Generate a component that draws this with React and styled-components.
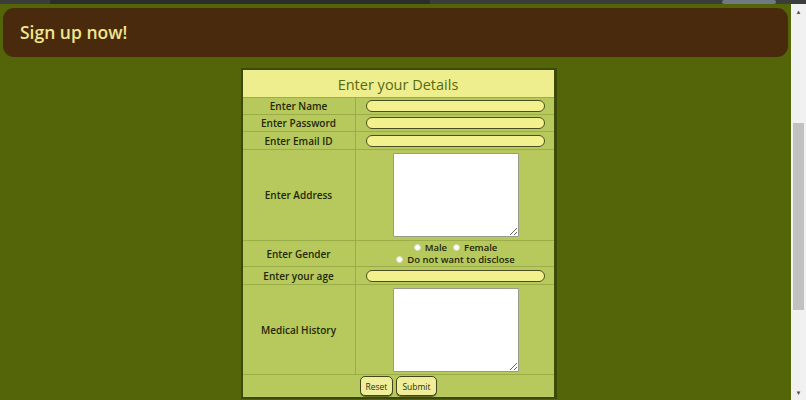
import React from "react";
import styled, { createGlobalStyle } from "styled-components";

const Global = createGlobalStyle`
  html, body { margin: 0; padding: 0; height: 400px; overflow: hidden; }
  body { font-family: "Open Sans", "Lato", sans-serif; background: #546509; }
  * { box-sizing: border-box; }
`;

const Shell = styled.div`
  display: flex;
  flex-direction: column;
  height: 400px;
`;

const TopStrip = styled.div`
  height: 4px;
  background: #3b3d3a;
  display: flex;
  align-items: stretch;
`;

const StripPart = styled.div`
  width: ${(p) => p.$w}px;
  background: ${(p) => p.$c};
  border-radius: ${(p) => p.$r || 0}px;
`;

const Body = styled.div`
  flex: 1;
  display: flex;
  min-height: 0;
`;

const Page = styled.div`
  flex: 1;
  padding: 4px 3px 0 3px;
  overflow: hidden;
  display: flex;
  flex-direction: column;
  align-items: center;
`;

const Banner = styled.header`
  align-self: stretch;
  height: 49px;
  background: #4a2a0c;
  border-radius: 11px;
  display: flex;
  align-items: center;
  padding-left: 17px;
  padding-bottom: 1px;
`;

const BannerTitle = styled.h1`
  margin: 0;
  font-size: 17.5px;
  font-weight: 600;
  color: #f0e68c;
`;

const Form = styled.form`
  margin-top: 11px;
  margin-left: 6px;
  width: 316px;
  border: 2px solid #3b4a06;
  border-right-width: 3px;
  background: #b7c95c;
  display: grid;
  grid-template-columns: 113px 1fr;
`;

const Caption = styled.div`
  grid-column: 1 / -1;
  height: 27px;
  background: #efee8e;
  color: #566a10;
  font-size: 14.5px;
  display: flex;
  align-items: center;
  justify-content: center;
  padding-top: 1px;
`;

const Label = styled.div`
  height: ${(p) => p.$h}px;
  border-top: 1px solid #9aae48;
  border-right: 1px solid #9aae48;
  display: flex;
  align-items: center;
  justify-content: center;
  font-size: 10px;
  font-weight: 600;
  color: #23270b;
`;

const Field = styled.div`
  height: ${(p) => p.$h}px;
  border-top: 1px solid #9aae48;
  display: flex;
  flex-direction: column;
  align-items: center;
  justify-content: center;
`;

const TextInput = styled.input`
  width: 179px;
  height: 12px;
  margin: 0 0 0 2px;
  padding: 0 6px;
  background: #f3f08e;
  border: 1px solid #4b4d22;
  border-radius: 7px;
  outline: none;
`;

const Area = styled.textarea`
  width: 126px;
  height: 84px;
  margin: 0 0 0 3px;
  background: #fff;
  border: 1px solid #9a9a8a;
  border-radius: 1px;
  resize: both;
`;

const RadioLine = styled.div`
  display: flex;
  align-items: center;
  gap: 4px;
  font-size: 9.5px;
  font-weight: 600;
  color: #23270b;
  line-height: 12px;
  height: 12px;
  white-space: nowrap;
  margin-left: 2px;
`;

const RadioDot = styled.span`
  width: 7px;
  height: 7px;
  border-radius: 50%;
  background: #fff;
  border: 1px solid #d8dcc0;
  display: inline-block;
  flex: none;
  margin-left: ${(p) => p.$ml || 0}px;
`;

const ButtonRow = styled.div`
  grid-column: 1 / -1;
  border-top: 1px solid #9aae48;
  height: 23px;
  display: flex;
  justify-content: center;
  align-items: flex-start;
  gap: 3px;
  padding-top: 1px;
`;

const Button = styled.button`
  height: 20px;
  padding: 0 5px;
  font-family: inherit;
  font-size: 8.5px;
  color: #2d3010;
  background: #efee9a;
  border: 1px solid #44461c;
  border-radius: 5px;
  box-shadow: 0 1px 0 #6b6d30;
`;

const Scrollbar = styled.div`
  width: 15px;
  background: #f1f1f1;
  display: flex;
  flex-direction: column;
  align-items: center;
`;

const Arrow = styled.div`
  height: 15px;
  display: flex;
  align-items: center;
  justify-content: center;
  color: #505050;
  font-size: 6px;
  line-height: 1;
`;

const Track = styled.div`
  flex: 1;
  width: 100%;
  padding: ${(p) => p.$before}px 2px ${(p) => p.$after}px 2px;
  display: flex;
`;

const Thumb = styled.div`
  flex: 1;
  background: #c1c1c1;
`;

const Row = ({ label, h, children }) => (
  <>
    <Label $h={h}>{label}</Label>
    <Field $h={h}>{children}</Field>
  </>
);

export default function App() {
  return (
    <>
      <Global />
      <Shell>
        <TopStrip>
          <StripPart $w={50} $c="#3b3d3a" />
          <StripPart $w={380} $c="#2c2e2c" />
          <StripPart $w={292} $c="#3b3d3a" />
          <StripPart $w={54} $c="#6f7a82" $r={3} />
        </TopStrip>
        <Body>
          <Page>
            <Banner>
              <BannerTitle>Sign up now!</BannerTitle>
            </Banner>
            <Form onSubmit={(e) => e.preventDefault()}>
              <Caption>Enter your Details</Caption>
              <Row label="Enter Name" h={17}>
                <TextInput type="text" />
              </Row>
              <Row label="Enter Password" h={17}>
                <TextInput type="password" />
              </Row>
              <Row label="Enter Email ID" h={18}>
                <TextInput type="email" />
              </Row>
              <Row label="Enter Address" h={91}>
                <Area />
              </Row>
              <Row label="Enter Gender" h={26}>
                <RadioLine>
                  <RadioDot />
                  <span>Male</span>
                  <RadioDot $ml={2} />
                  <span>Female</span>
                </RadioLine>
                <RadioLine>
                  <RadioDot />
                  <span>Do not want to disclose</span>
                </RadioLine>
              </Row>
              <Row label="Enter your age" h={18}>
                <TextInput type="text" />
              </Row>
              <Row label="Medical History" h={90}>
                <Area />
              </Row>
              <ButtonRow>
                <Button type="reset">Reset</Button>
                <Button type="submit">Submit</Button>
              </ButtonRow>
            </Form>
          </Page>
          <Scrollbar>
            <Arrow>▲</Arrow>
            <Track $before={104} $after={75}>
              <Thumb />
            </Track>
            <Arrow>▼</Arrow>
          </Scrollbar>
        </Body>
      </Shell>
    </>
  );
}
